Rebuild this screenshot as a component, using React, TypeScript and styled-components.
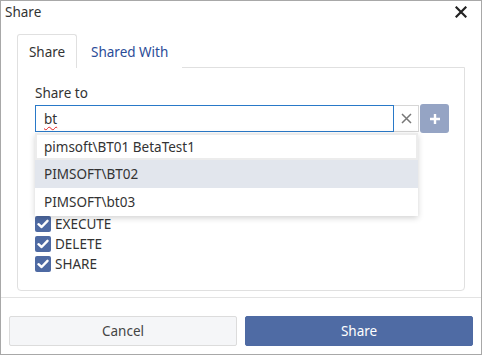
import React from "react";
import styled, { createGlobalStyle } from "styled-components";

const Global = createGlobalStyle`
  html, body { margin: 0; padding: 0; background: #fff; }
  body { font-family: "Noto Sans", "Open Sans", sans-serif; font-size: 13px; color: #333; }
  * { box-sizing: border-box; }
`;

const Dialog = styled.div`
  width: 482px;
  height: 355px;
  border: 1px solid #a8a8a8;
  display: flex;
  flex-direction: column;
  background: #fff;
`;

const TitleBar = styled.div`
  height: 22px;
  display: flex;
  align-items: center;
  justify-content: space-between;
  padding: 0 13px 0 4px;
  font-size: 13.5px;
  color: #333;
`;

const Close = styled.span`
  display: flex;
  width: 14px;
  height: 14px;
  align-items: center;
  justify-content: center;
`;

const Body = styled.div`
  padding: 11px 16px 0 16px;
`;

const TabBar = styled.div`
  display: flex;
  height: 33px;
`;

const Tab = styled.div<{ $active?: boolean }>`
  width: ${(p) => (p.$active ? "60px" : "auto")};
  padding: 0 ${(p) => (p.$active ? "0" : "13px")};
  display: flex;
  align-items: center;
  justify-content: center;
  font-size: 13.5px;
  color: ${(p) => (p.$active ? "#333" : "#2b4c98")};
  border: 1px solid ${(p) => (p.$active ? "#e0e0e0" : "transparent")};
  border-bottom: none;
  border-radius: 3px 3px 0 0;
  background: #fff;
  position: relative;
  z-index: 1;
  margin-bottom: -1px;
`;

const Panel = styled.div`
  position: relative;
  height: 224px;
  border: 1px solid #e0e0e0;
  border-radius: 0 0 4px 4px;
  padding: 15px 0 0 16px;
`;

const Label = styled.div`
  font-size: 13.5px;
  line-height: 20px;
  height: 21px;
  padding-left: 1px;
`;

const InputRow = styled.div`
  display: flex;
  align-items: stretch;
  height: 29px;
  position: relative;
`;

const Field = styled.div`
  width: 359px;
  height: 27px;
  margin-top: 1px;
  border: 1px solid #2979c8;
  display: flex;
  align-items: center;
  padding-left: 8px;
  font-size: 13.5px;
  margin-left: 1px;
`;

const Misspelled = styled.span`
  text-decoration: underline wavy #e02020;
  text-decoration-thickness: 1px;
  text-underline-offset: 2px;
`;

const ClearBtn = styled.div`
  width: 25px;
  height: 27px;
  margin-top: 1px;
  border: 1px solid #d6d6d6;
  border-left: none;
  display: flex;
  align-items: center;
  justify-content: center;
`;

const AddBtn = styled.div`
  width: 29px;
  height: 29px;
  margin-left: 1px;
  background: #95a4c4;
  border-radius: 3px;
  display: flex;
  align-items: center;
  justify-content: center;
`;

const Dropdown = styled.div`
  position: absolute;
  top: 65px;
  left: 17px;
  width: 383px;
  background: #fff;
  box-shadow: 0 2px 6px rgba(0, 0, 0, 0.18);
  z-index: 5;
  display: flex;
  flex-direction: column;
`;

const Option = styled.div<{ $hover?: boolean; $focus?: boolean }>`
  height: ${(p) => (p.$focus ? "27px" : "28px")};
  display: flex;
  align-items: center;
  font-size: 13.5px;
  color: #333;
  background: ${(p) => (p.$hover ? "#e2e6ed" : "#fff")};
  border: ${(p) => (p.$focus ? "2px solid #ececec" : "none")};
  padding-left: ${(p) => (p.$focus ? "7px" : "9px")};
`;

const Checks = styled.div`
  display: flex;
  flex-direction: column;
  gap: 4px;
  margin-top: 83px;
`;

const CheckRow = styled.label`
  display: flex;
  align-items: center;
  gap: 4px;
  height: 16px;
  font-size: 13.5px;
  color: #333;
  padding-left: 1px;
`;

const Box = styled.span`
  width: 16px;
  height: 16px;
  border-radius: 2px;
  background: #4e6aa3;
  display: flex;
  align-items: center;
  justify-content: center;
`;

const Footer = styled.div`
  margin-top: 6px;
  border-top: 1px solid #e3e3e3;
  padding: 18px 8px 0 8px;
  display: flex;
  gap: 8px;
`;

const Button = styled.button<{ $primary?: boolean }>`
  flex: 1;
  height: 30px;
  font-family: inherit;
  font-size: 13.5px;
  border-radius: 2px;
  border: 1px solid ${(p) => (p.$primary ? "#4e6aa3" : "#dcdcdc")};
  background: ${(p) => (p.$primary ? "#4f6ba4" : "#f5f6f8")};
  color: ${(p) => (p.$primary ? "#fff" : "#444")};
`;

const Check = () => (
  <svg width="12" height="10" viewBox="0 0 12 10">
    <path d="M1.5 5.2 L4.6 8 L10.5 1.8" fill="none" stroke="#fff" strokeWidth="2.4" strokeLinecap="round" strokeLinejoin="round" />
  </svg>
);

const perms = ["EXECUTE", "DELETE", "SHARE"];

export default function App() {
  return (
    <>
      <Global />
      <Dialog>
        <TitleBar>
          <span>Share</span>
          <Close>
            <svg width="12" height="12" viewBox="0 0 12 12">
              <path d="M1.5 1.5 L10.5 10.5 M10.5 1.5 L1.5 10.5" stroke="#222" strokeWidth="2.2" strokeLinecap="square" />
            </svg>
          </Close>
        </TitleBar>
        <Body>
          <TabBar>
            <Tab $active>Share</Tab>
            <Tab>Shared With</Tab>
          </TabBar>
          <Panel>
            <Label>Share to</Label>
            <InputRow>
              <Field>
                <Misspelled>bt</Misspelled>
              </Field>
              <ClearBtn>
                <svg width="11" height="11" viewBox="0 0 11 11">
                  <path d="M1 1 L10 10 M10 1 L1 10" stroke="#777" strokeWidth="1.5" />
                </svg>
              </ClearBtn>
              <AddBtn>
                <svg width="12" height="12" viewBox="0 0 12 12">
                  <path d="M6 1 V11 M1 6 H11" stroke="#fff" strokeWidth="2.4" />
                </svg>
              </AddBtn>
            </InputRow>
            <Dropdown>
              <Option $focus>pimsoft\BT01 BetaTest1</Option>
              <Option $hover>PIMSOFT\BT02</Option>
              <Option>PIMSOFT\bt03</Option>
            </Dropdown>
            <Checks>
              {perms.map((p) => (
                <CheckRow key={p}>
                  <Box>
                    <Check />
                  </Box>
                  {p}
                </CheckRow>
              ))}
            </Checks>
          </Panel>
        </Body>
        <Footer>
          <Button>Cancel</Button>
          <Button $primary>Share</Button>
        </Footer>
      </Dialog>
    </>
  );
}
